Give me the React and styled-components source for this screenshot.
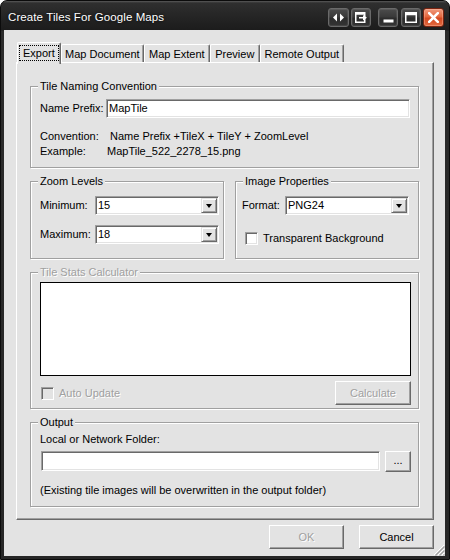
import React from 'react';
import styled, { createGlobalStyle } from 'styled-components';

const Global = createGlobalStyle`
  * { box-sizing: border-box; }
  html, body { margin: 0; padding: 0; background: #fff; }
  body { font-family: "Liberation Sans", Arial, sans-serif; font-size: 11px; color: #000; }
`;

const FACE = '#e3e3e3';

const Window = styled.div`
  width: 450px;
  height: 560px;
  display: flex;
  flex-direction: column;
  border: 1px solid #0b0b0b;
  border-radius: 7px 7px 0 0;
  background: linear-gradient(to bottom, #5a5a5a 0, #2f2f2f 2px, #262626 14px, #1c1c1c 29px, #2b2b2b 30px, #262626 100%);
  padding: 0 4px 3px 3px;
  overflow: hidden;
`;

const TitleBar = styled.div`
  height: 29px;
  flex: none;
  display: flex;
  align-items: center;
  padding: 3px 1px 0 4px;
`;

const Title = styled.div`
  flex: 1;
  color: #fff;
  font-size: 11.5px;
  text-shadow: 0 0 3px rgba(0,0,0,0.9);
  letter-spacing: 0.1px;
`;

const CaptionButton = styled.div`
  width: ${p => p.$w || 20}px;
  height: 19px;
  margin-left: ${p => p.$gap || 0}px;
  border-radius: 3px;
  border: 1px solid ${p => (p.$close ? '#7a2410' : '#6a6a6a')};
  background: ${p =>
    p.$close
      ? 'linear-gradient(to bottom, #f09a7e 0, #e4683f 45%, #d44a22 55%, #e2693f 100%)'
      : 'linear-gradient(to bottom, #4c4c4c 0, #3a3a3a 45%, #2c2c2c 55%, #343434 100%)'};
  box-shadow: inset 0 0 0 1px ${p => (p.$close ? 'rgba(255,200,180,0.35)' : 'rgba(255,255,255,0.08)')};
  display: flex;
  align-items: center;
  justify-content: center;
`;

const Client = styled.div`
  position: relative;
  flex: 1;
  background: ${FACE};
  display: flex;
  flex-direction: column;
  padding: 12px 11px 0 12px;
`;

const TabStrip = styled.div`
  height: 20px;
  display: flex;
  align-items: flex-end;
  padding-left: 1px;
`;

const Tab = styled.div`
  position: relative;
  z-index: ${p => (p.$active ? 2 : 0)};
  flex: none;
  width: ${p => (p.$w ? `${p.$w}px` : 'auto')};
  height: ${p => (p.$active ? 22 : 18)}px;
  margin-bottom: ${p => (p.$active ? -2 : 0)}px;
  padding: ${p => (p.$active ? '0 1px 2px 1px' : '0')};
  display: flex;
  align-items: center;
  justify-content: center;
  background: ${FACE};
  border-top: 1px solid #fff;
  border-left: 1px solid #fff;
  border-right: 1px solid #696969;
  box-shadow: inset -1px 0 #a0a0a0;
  border-radius: 2px 2px 0 0;
  line-height: 14px;
  white-space: nowrap;
`;

const Focus = styled.span`
  border: 1px dotted #000;
  padding: 0 3px;
  line-height: 14px;
`;

const Panel = styled.div`
  position: relative;
  z-index: 1;
  height: 458px;
  flex: none;
  border-top: 1px solid #fff;
  border-left: 1px solid #fff;
  border-right: 1px solid #696969;
  border-bottom: 1px solid #696969;
  box-shadow: inset -1px -1px #a0a0a0;
  padding: 23px 14px 0 13px;
  display: flex;
  flex-direction: column;
  gap: 13px;
`;

const Group = styled.div`
  position: relative;
  flex: ${p => (p.$grow ? '1' : 'none')};
  width: ${p => (p.$w ? `${p.$w}px` : 'auto')};
  height: ${p => p.$h}px;
  border: 1px solid #a0a0a0;
  box-shadow: inset 1px 1px #fff, 1px 1px #fff;
  padding: ${p => p.$pad};
  display: flex;
  flex-direction: column;
`;

const Legend = styled.span`
  position: absolute;
  top: -8px;
  left: 7px;
  padding: 0 2px;
  line-height: 15px;
  background: ${FACE};
  color: ${p => (p.$disabled ? '#a0a0a0' : '#000')};
  text-shadow: ${p => (p.$disabled ? '1px 1px #fff' : 'none')};
`;

const GroupRow = styled.div`
  display: flex;
  gap: 11px;
`;

const Row = styled.div`
  display: flex;
  align-items: ${p => p.$align || 'center'};
  justify-content: ${p => p.$justify || 'flex-start'};
  margin-top: ${p => p.$mt || 0}px;
  line-height: 15px;
  height: ${p => (p.$h ? `${p.$h}px` : 'auto')};
`;

const Label = styled.span`
  flex: none;
  width: ${p => (p.$w ? `${p.$w}px` : 'auto')};
  margin-left: ${p => p.$ml || 0}px;
  color: ${p => (p.$disabled ? '#a0a0a0' : '#000')};
  text-shadow: ${p => (p.$disabled ? '1px 1px #fff' : 'none')};
  white-space: nowrap;
`;

const sunken = `
  border: 1px solid;
  border-color: #a0a0a0 #fff #fff #a0a0a0;
  box-shadow: inset 1px 1px #696969, inset -1px -1px ${FACE};
`;

const TextInput = styled.div`
  ${sunken}
  flex: ${p => (p.$w ? 'none' : '1')};
  width: ${p => (p.$w ? `${p.$w}px` : 'auto')};
  height: ${p => p.$h || 19}px;
  margin-left: ${p => p.$ml || 0}px;
  background: #fff;
  padding: 0 2px;
  display: flex;
  align-items: center;
  line-height: 15px;
`;

const Select = styled.div`
  ${sunken}
  width: 124px;
  height: 19px;
  padding: 1px;
  background: #fff;
  display: flex;
  align-items: center;
`;

const SelectValue = styled.span`
  flex: 1;
  padding-left: 1px;
  line-height: 15px;
`;

const DropButton = styled.div`
  width: 16px;
  height: 15px;
  background: ${FACE};
  border: 1px solid;
  border-color: ${FACE} #696969 #696969 ${FACE};
  box-shadow: inset 1px 1px #fff, inset -1px -1px #a0a0a0;
  display: flex;
  align-items: center;
  justify-content: center;
`;

const Arrow = styled.span`
  width: 0;
  height: 0;
  border-left: 3.5px solid transparent;
  border-right: 3.5px solid transparent;
  border-top: 4px solid #000;
  margin-top: 1px;
`;

const Check = styled.div`
  ${sunken}
  flex: none;
  width: 13px;
  height: 13px;
  margin-left: ${p => p.$ml || 0}px;
  margin-right: 5px;
  background: ${p => (p.$disabled ? FACE : '#fff')};
`;

const StatsBox = styled.div`
  width: 371px;
  height: 94px;
  flex: none;
  border: 1px solid #000;
  background: #fff;
`;

const Button = styled.div`
  flex: none;
  width: ${p => p.$w}px;
  height: ${p => p.$h || 24}px;
  margin-left: ${p => p.$ml || 0}px;
  background: ${FACE};
  border: 1px solid;
  border-color: #fff #696969 #696969 #fff;
  box-shadow: inset -1px -1px #a0a0a0, inset 1px 1px ${FACE};
  display: flex;
  align-items: center;
  justify-content: center;
  line-height: 14px;
  padding-bottom: ${p => p.$pb || 0}px;
  color: ${p => (p.$disabled ? '#a0a0a0' : '#000')};
  text-shadow: ${p => (p.$disabled ? '1px 1px #fff' : 'none')};
`;

const Footer = styled.div`
  display: flex;
  justify-content: flex-end;
  gap: 15px;
  margin-top: 5px;
`;

const Grip = styled.svg`
  position: absolute;
  right: 0;
  bottom: 0;
`;

const Glyph = ({ children, w = 12, h = 12 }) => (
  <svg width={w} height={h} viewBox={`0 0 ${w} ${h}`}>{children}</svg>
);

export default function App() {
  return (
    <>
      <Global />
      <Window>
        <TitleBar>
          <Title>Create Tiles For Google Maps</Title>
          <CaptionButton $w={21}>
            <Glyph w={11} h={9}>
              <polygon points="0,4.5 4,0.5 4,8.5" fill="#fff" />
              <polygon points="7,0.5 11,4.5 7,8.5" fill="#fff" />
            </Glyph>
          </CaptionButton>
          <CaptionButton $gap={2}>
            <Glyph w={12} h={11}>
              <rect x="0.75" y="0.75" width="9" height="9.5" fill="none" stroke="#fff" strokeWidth="1.5" />
              <rect x="0.75" y="0.75" width="9" height="2" fill="#fff" />
              <rect x="4" y="5" width="5" height="1.5" fill="#fff" />
              <polygon points="8,3 12,5.75 8,8.5" fill="#fff" />
            </Glyph>
          </CaptionButton>
          <CaptionButton $gap={7}>
            <Glyph w={11} h={11}>
              <rect x="0.5" y="7.5" width="10" height="3" fill="#fff" />
            </Glyph>
          </CaptionButton>
          <CaptionButton $gap={3}>
            <Glyph w={12} h={11}>
              <rect x="0.75" y="0.75" width="10.5" height="9.5" fill="none" stroke="#fff" strokeWidth="1.5" />
              <rect x="0.75" y="0.75" width="10.5" height="2.5" fill="#fff" />
            </Glyph>
          </CaptionButton>
          <CaptionButton $close $w={21} $gap={2}>
            <Glyph w={11} h={11}>
              <path d="M1.2 1.2 L9.8 9.8 M9.8 1.2 L1.2 9.8" stroke="#fff" strokeWidth="2.6" strokeLinecap="square" />
            </Glyph>
          </CaptionButton>
        </TitleBar>

        <Client>
          <TabStrip>
            <Tab $active>
              <Focus>Export</Focus>
            </Tab>
            <Tab $w={83}>Map Document</Tab>
            <Tab $w={66}>Map Extent</Tab>
            <Tab $w={50}>Preview</Tab>
            <Tab $w={84}>Remote Output</Tab>
          </TabStrip>

          <Panel>
            <Group $h={82} $pad="12px 8px 0 9px">
              <Legend>Tile Naming Convention</Legend>
              <Row $h={19}>
                <Label $w={66}>Name Prefix:</Label>
                <TextInput>MapTile</TextInput>
              </Row>
              <Row $mt={11}>
                <Label $w={70}>Convention:</Label>
                <Label>Name Prefix +TileX + TileY + ZoomLevel</Label>
              </Row>
              <Row>
                <Label $w={67}>Example:</Label>
                <Label>MapTile_522_2278_15.png</Label>
              </Row>
            </Group>

            <GroupRow>
              <Group $w={194} $h={78} $pad="14px 0 0 9px">
                <Legend>Zoom Levels</Legend>
                <Row $h={19}>
                  <Label $w={55}>Minimum:</Label>
                  <Select>
                    <SelectValue>15</SelectValue>
                    <DropButton><Arrow /></DropButton>
                  </Select>
                </Row>
                <Row $h={19} $mt={10}>
                  <Label $w={55}>Maximum:</Label>
                  <Select>
                    <SelectValue>18</SelectValue>
                    <DropButton><Arrow /></DropButton>
                  </Select>
                </Row>
              </Group>
              <Group $grow $h={78} $pad="14px 0 0 6px">
                <Legend>Image Properties</Legend>
                <Row $h={19}>
                  <Label $w={43}>Format:</Label>
                  <Select>
                    <SelectValue>PNG24</SelectValue>
                    <DropButton><Arrow /></DropButton>
                  </Select>
                </Row>
                <Row $mt={17} $h={13}>
                  <Check $ml={3} />
                  <Label>Transparent Background</Label>
                </Row>
              </Group>
            </GroupRow>

            <Group $h={137} $pad="9px 7px 0 9px">
              <Legend $disabled>Tile Stats Calculator</Legend>
              <StatsBox />
              <Row $mt={5} $justify="space-between">
                <Row>
                  <Check $ml={1} $disabled />
                  <Label $disabled>Auto Update</Label>
                </Row>
                <Button $w={76} $disabled>Calculate</Button>
              </Row>
            </Group>

            <Group $h={85} $pad="9px 7px 0 9px">
              <Legend>Output</Legend>
              <Row>
                <Label>Local or Network Folder:</Label>
              </Row>
              <Row $mt={4} $align="flex-start">
                <TextInput $w={339} $h={20} $ml={1} />
                <Button $w={26} $h={21} $pb={3} $ml={5}>...</Button>
              </Row>
              <Row $mt={11}>
                <Label>(Existing tile images will be overwritten in the output folder)</Label>
              </Row>
            </Group>
          </Panel>

          <Footer>
            <Button $w={75} $disabled>OK</Button>
            <Button $w={75}>Cancel</Button>
          </Footer>

          <Grip width="13" height="12" viewBox="0 0 13 12">
            <path d="M12 1 L2 11 M12 5 L6 11 M12 9 L10 11" stroke="#fff" strokeWidth="1" />
            <path d="M12.5 2.5 L3.5 11.5 M12.5 6.5 L7.5 11.5 M12.5 10.5 L11.5 11.5" stroke="#a0a0a0" strokeWidth="1.2" />
          </Grip>
        </Client>
      </Window>
    </>
  );
}
